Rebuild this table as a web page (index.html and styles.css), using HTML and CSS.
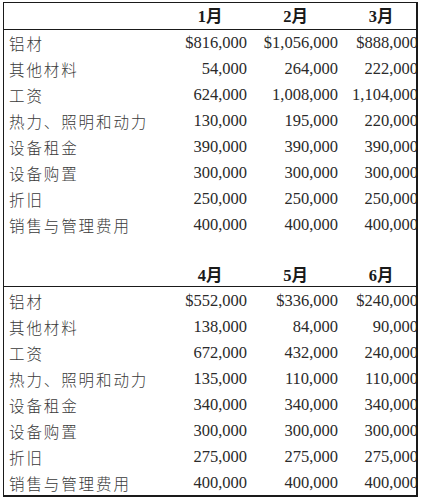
FILE: index.html
```
<!DOCTYPE html>
<html lang="zh">
<head>
<meta charset="utf-8">
<link rel="stylesheet" href="styles.css">
</head>
<body>
<div class="sheet">
<table class="grid">
<colgroup><col class="c-label"><col class="c-m1"><col class="c-m2"><col class="c-m3"></colgroup>
<tbody>
<tr class="head"><td></td><th>1月</th><th>2月</th><th>3月</th></tr>
<tr><td class="label">铝材</td><td>$816,000</td><td>$1,056,000</td><td>$888,000</td></tr>
<tr><td class="label">其他材料</td><td>54,000</td><td>264,000</td><td>222,000</td></tr>
<tr><td class="label">工资</td><td>624,000</td><td>1,008,000</td><td>1,104,000</td></tr>
<tr><td class="label">热力、照明和动力</td><td>130,000</td><td>195,000</td><td>220,000</td></tr>
<tr><td class="label">设备租金</td><td>390,000</td><td>390,000</td><td>390,000</td></tr>
<tr><td class="label">设备购置</td><td>300,000</td><td>300,000</td><td>300,000</td></tr>
<tr><td class="label">折旧</td><td>250,000</td><td>250,000</td><td>250,000</td></tr>
<tr><td class="label">销售与管理费用</td><td>400,000</td><td>400,000</td><td>400,000</td></tr>
<tr class="blank"><td></td><td></td><td></td><td></td></tr>
<tr class="head head2"><td></td><th>4月</th><th>5月</th><th>6月</th></tr>
<tr><td class="label">铝材</td><td>$552,000</td><td>$336,000</td><td>$240,000</td></tr>
<tr><td class="label">其他材料</td><td>138,000</td><td>84,000</td><td>90,000</td></tr>
<tr><td class="label">工资</td><td>672,000</td><td>432,000</td><td>240,000</td></tr>
<tr><td class="label">热力、照明和动力</td><td>135,000</td><td>110,000</td><td>110,000</td></tr>
<tr><td class="label">设备租金</td><td>340,000</td><td>340,000</td><td>340,000</td></tr>
<tr><td class="label">设备购置</td><td>300,000</td><td>300,000</td><td>300,000</td></tr>
<tr><td class="label">折旧</td><td>275,000</td><td>275,000</td><td>275,000</td></tr>
<tr><td class="label">销售与管理费用</td><td>400,000</td><td>400,000</td><td>400,000</td></tr>
</tbody>
</table>
</div>
</body>
</html>
```
FILE: styles.css
```
html, body {
  margin: 0;
  padding: 0;
  background: #ffffff;
}
body {
  padding: 2px 0 0 3px;
}
.sheet {
  width: 412px;
  border-top: 1px solid #1a1a1a;
  border-left: 1px solid #1a1a1a;
  border-right: 2px solid #1a1a1a;
  border-bottom: 2px solid #1a1a1a;
  overflow: hidden;
  background: #fff;
}
.grid {
  width: 417px;
  table-layout: fixed;
  border-collapse: collapse;
  border-spacing: 0;
  font-family: "Liberation Serif", "Noto Sans CJK SC", serif;
  font-size: 16.5px;
  color: #2a2a2a;
}
.c-label { width: 166px; }
.c-m1 { width: 80px; }
.c-m2 { width: 91px; }
.c-m3 { width: 80px; }
.grid td, .grid th {
  height: 26px;
  padding: 2px 3px 0 0;
  box-sizing: border-box;
  text-align: right;
  white-space: nowrap;
  line-height: 20px;
  vertical-align: middle;
}
.grid th {
  text-align: center;
  padding: 2px 0 0 0;
  font-weight: bold;
  color: #1a1a1a;
}
.grid .label {
  text-align: left;
  padding-left: 5px;
  font-family: "Noto Sans CJK SC", sans-serif;
  font-size: 15.5px;
  letter-spacing: 1.9px;
  font-weight: 300;
  color: #3a3a3a;
}
.head td, .head th {
  border-bottom: 1px solid #1a1a1a;
}
.head2 td, .head2 th {
  height: 24px;
  padding-top: 4px;
}
.blank td {
  height: 25px;
}
```
